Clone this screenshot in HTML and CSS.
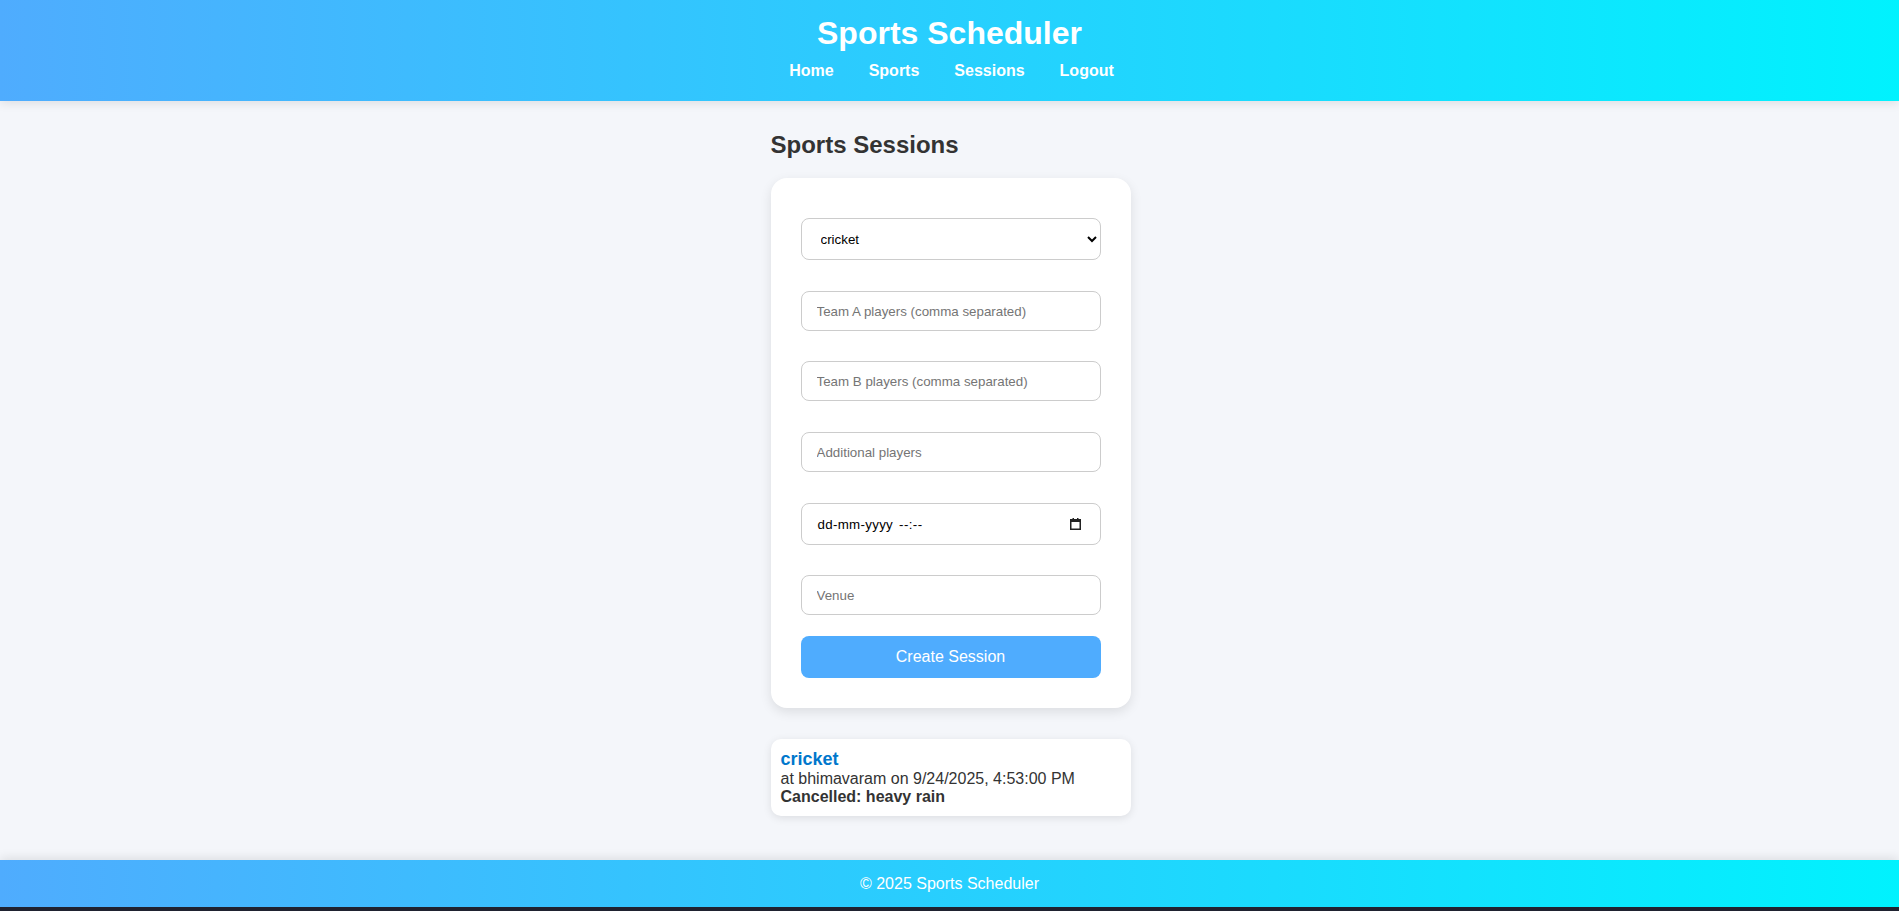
FILE: index.html
```html
<!DOCTYPE html>
<html lang="en">
<head>
<meta charset="utf-8">
<title>Sports Scheduler</title>
<link rel="stylesheet" href="styles.css">
</head>
<body>
<header class="site-header">
  <h1 class="site-title">Sports Scheduler</h1>
  <nav class="site-nav">
    <a href="#">Home</a>
    <a href="#">Sports</a>
    <a href="#">Sessions</a>
    <a href="#">Logout</a>
  </nav>
</header>
<main class="main">
  <h2 class="page-title">Sports Sessions</h2>
  <div class="form-card">
    <form class="session-form">
      <select class="field field-select">
        <option>cricket</option>
      </select>
      <input class="field field-text field-a" type="text" placeholder="Team A players (comma separated)">
      <input class="field field-text field-b" type="text" placeholder="Team B players (comma separated)">
      <input class="field field-text field-b" type="text" placeholder="Additional players">
      <div class="field field-date" tabindex="0">
        <span class="date-text"><span class="date-part">dd-mm-yyyy</span><span class="time-part">--:--</span></span>
        <svg class="date-icon" width="11" height="12" viewBox="0 0 11 12" aria-hidden="true">
          <rect x="0.75" y="1.75" width="9.5" height="9.5" fill="none" stroke="#222" stroke-width="1.5"/>
          <rect x="0.75" y="1.5" width="9.5" height="2.5" fill="#222"/>
          <rect x="2.5" y="0" width="1.5" height="2" fill="#222"/>
          <rect x="7" y="0" width="1.5" height="2" fill="#222"/>
        </svg>
      </div>
      <input class="field field-text field-last" type="text" placeholder="Venue">
      <button class="btn-create" type="button">Create Session</button>
    </form>
  </div>
  <div class="session-card">
    <div class="session-sport">cricket</div>
    <div class="session-info">at bhimavaram on 9/24/2025, 4:53:00 PM</div>
    <div class="session-cancel">Cancelled: heavy rain</div>
  </div>
</main>
<footer class="site-footer">© 2025 Sports Scheduler</footer>
</body>
</html>
```
FILE: styles.css
```css
html {
  background: #1f2230;
}
body {
  margin: 0;
  background: #f4f6fa;
  font-family: "Liberation Sans", Arial, sans-serif;
  color: #333;
}
.site-header {
  background: linear-gradient(to right, #4facfe, #00f2fe);
  padding: 15px 0 21px;
  text-align: center;
  box-shadow: 0 2px 10px rgba(0, 0, 0, 0.1);
  position: relative;
}
.site-title {
  margin: 0 0 10px;
  font-size: 32px;
  font-weight: bold;
  color: #fff;
}
.site-nav {
  display: flex;
  justify-content: center;
  gap: 35px;
  position: relative;
  left: 2px;
}
.site-nav a {
  color: #fff;
  font-weight: bold;
  font-size: 16px;
  text-decoration: none;
}
.main {
  width: 360px;
  margin: 0 auto;
  padding: 30px 0 44px;
  position: relative;
  left: 1px;
}
.page-title {
  margin: 0 0 19px;
  font-size: 24px;
  font-weight: bold;
  color: #333;
}
.form-card {
  background: #fff;
  border-radius: 16px;
  padding: 40px 30px 30px;
  box-shadow: 0 4px 12px rgba(0, 0, 0, 0.1);
}
.session-form {
  display: flex;
  flex-direction: column;
}
.field {
  box-sizing: border-box;
  width: 100%;
  border: 1px solid #ccc;
  border-radius: 8px;
  font-family: "Liberation Sans", Arial, sans-serif;
  font-size: 13.333px;
  color: #000;
  background: #fff;
  margin: 0 0 30px;
  padding: 0 15px;
}
.field::placeholder {
  color: #757575;
}
.field-select {
  height: 42px;
  margin-bottom: 31px;
}
.field-text {
  height: 40px;
}
.field-b {
  margin-bottom: 31px;
}
.field-date {
  height: 42px;
  display: flex;
  align-items: center;
  justify-content: space-between;
  padding: 0 19px 0 16px;
}
.date-part {
  letter-spacing: 0.3px;
}
.time-part {
  margin-left: 6px;
  letter-spacing: 0.4px;
}
.date-icon {
  display: block;
}
.field-last {
  margin-bottom: 21px;
}
.btn-create {
  height: 42px;
  border: none;
  border-radius: 8px;
  background: #4facfe;
  color: #fff;
  font-family: "Liberation Sans", Arial, sans-serif;
  font-size: 16px;
  cursor: pointer;
}
.session-card {
  margin-top: 31px;
  background: #fff;
  border-radius: 10px;
  padding: 10px;
  box-shadow: 0 2px 8px rgba(0, 0, 0, 0.1);
  font-size: 16px;
}
.session-sport {
  color: #0077cc;
  font-weight: bold;
  font-size: 18px;
}
.session-info {
  color: #333;
}
.session-cancel {
  color: #333;
  font-weight: bold;
}
.site-footer {
  background: linear-gradient(to right, #4facfe, #00f2fe);
  color: #fff;
  text-align: center;
  padding: 15px 0 14px;
  font-size: 16px;
  box-shadow: 0 -2px 10px rgba(0, 0, 0, 0.1);
}
```
